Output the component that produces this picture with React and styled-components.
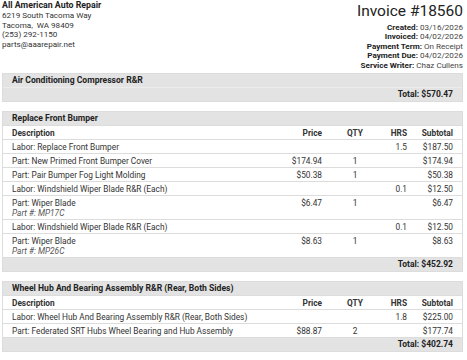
import React from 'react';
import styled, { createGlobalStyle } from 'styled-components';

const GlobalStyle = createGlobalStyle`
	html, body {
		margin: 0;
		padding: 0;
		background: #fff;
	}
	body {
		font-family: Roboto, "Liberation Sans", Arial, sans-serif;
		color: #222;
	}
`

const Page = styled.div`
	width: 467px;
	box-sizing: border-box;
	padding: 0 4px 0 2px;
`

const Header = styled.div`
	display: flex;
	justify-content: space-between;
	align-items: flex-start;
	margin-bottom: 3px;
`

const Shop = styled.div`
	font-size: 8.1px;
	line-height: 9.5px;
	color: #333;
`

const ShopName = styled.div`
	font-weight: 700;
	font-size: 8.8px;
	line-height: 11px;
	color: #222;
`

const Meta = styled.div`
	text-align: right;
	font-size: 8.1px;
	line-height: 9.4px;
	color: #444;
	b {
		color: #222;
	}
`

const Title = styled.div`
	font-size: 15.5px;
	line-height: 22px;
	margin-bottom: 1px;
	color: #222;
`

const Section = styled.div`
	border: 1px solid #dcdcdc;
	margin-bottom: 9px;
	font-size: 8.3px;
`

const SectionTitle = styled.div`
	background: #e3e3e3;
	font-weight: 700;
	font-size: 8.6px;
	height: 13px;
	line-height: 13px;
	padding: 0 9px;
`

const Total = styled.div`
	background: #e3e3e3;
	font-weight: 700;
	font-size: 8.5px;
	text-align: right;
	height: 13px;
	line-height: 13px;
	padding: 0 9px;
	border-top: 1px solid ${({ empty }) => (empty ? '#ececec' : '#dcdcdc')};
`

const Row = styled.div`
	display: grid;
	grid-template-columns: 1fr 64px 66px 19px 46px;
	padding: 2px 9px 1px;
	line-height: 10px;
	border-top: 1px solid #dcdcdc;
	background: #fff;
	color: #333;
	font-weight: ${({ head }) => (head ? 700 : 400)};
	white-space: nowrap;
`

const Cell = styled.div`
	text-align: ${({ align }) => align || 'left'};
`

const PartNo = styled.div`
	font-style: italic;
	color: #555;
`

const sections = [
	{
		title: 'Air Conditioning Compressor R&R',
		total: '$570.47',
		items: []
	},
	{
		title: 'Replace Front Bumper',
		total: '$452.92',
		items: [
			{ desc: 'Labor: Replace Front Bumper', hrs: '1.5', sub: '$187.50' },
			{ desc: 'Part: New Primed Front Bumper Cover', price: '$174.94', qty: '1', sub: '$174.94' },
			{ desc: 'Part: Pair Bumper Fog Light Molding', price: '$50.38', qty: '1', sub: '$50.38' },
			{ desc: 'Labor: Windshield Wiper Blade R&R (Each)', hrs: '0.1', sub: '$12.50' },
			{ desc: 'Part: Wiper Blade', part: 'MP17C', price: '$6.47', qty: '1', sub: '$6.47' },
			{ desc: 'Labor: Windshield Wiper Blade R&R (Each)', hrs: '0.1', sub: '$12.50' },
			{ desc: 'Part: Wiper Blade', part: 'MP26C', price: '$8.63', qty: '1', sub: '$8.63' }
		]
	},
	{
		title: 'Wheel Hub And Bearing Assembly R&R (Rear, Both Sides)',
		total: '$402.74',
		items: [
			{ desc: 'Labor: Wheel Hub And Bearing Assembly R&R (Rear, Both Sides)', hrs: '1.8', sub: '$225.00' },
			{ desc: 'Part: Federated SRT Hubs Wheel Bearing and Hub Assembly', price: '$88.87', qty: '2', sub: '$177.74' }
		]
	}
]

const App = () => {
	return <Page>
		<GlobalStyle />
		<Header>
			<Shop>
				<ShopName>All American Auto Repair</ShopName>
				<div>6219 South Tacoma Way</div>
				<div>Tacoma,&nbsp; WA 98409</div>
				<div>(253) 292-1150</div>
				<div>parts@aaarepair.net</div>
			</Shop>
			<Meta>
				<Title>Invoice #18560</Title>
				<div><b>Created:</b> 03/16/2026</div>
				<div><b>Invoiced:</b> 04/02/2026</div>
				<div><b>Payment Term:</b> On Receipt</div>
				<div><b>Payment Due:</b> 04/02/2026</div>
				<div><b>Service Writer:</b> Chaz Cullens</div>
			</Meta>
		</Header>
		{
			sections.map((s) => {
				return <Section key={s.title}>
					<SectionTitle>{s.title}</SectionTitle>
					{s.items.length > 0 && <Row head>
						<Cell>Description</Cell>
						<Cell align="right">Price</Cell>
						<Cell align="center">QTY</Cell>
						<Cell align="right">HRS</Cell>
						<Cell align="right">Subtotal</Cell>
					</Row>}
					{
						s.items.map((it, i) => <Row key={i}>
							<Cell>
								{it.desc}
								{it.part && <PartNo>Part #: {it.part}</PartNo>}
							</Cell>
							<Cell align="right">{it.price}</Cell>
							<Cell align="center">{it.qty}</Cell>
							<Cell align="right">{it.hrs}</Cell>
							<Cell align="right">{it.sub}</Cell>
						</Row>)
					}
					<Total empty={s.items.length === 0}>Total: {s.total}</Total>
				</Section>
			})
		}
	</Page>
}

export default App;
